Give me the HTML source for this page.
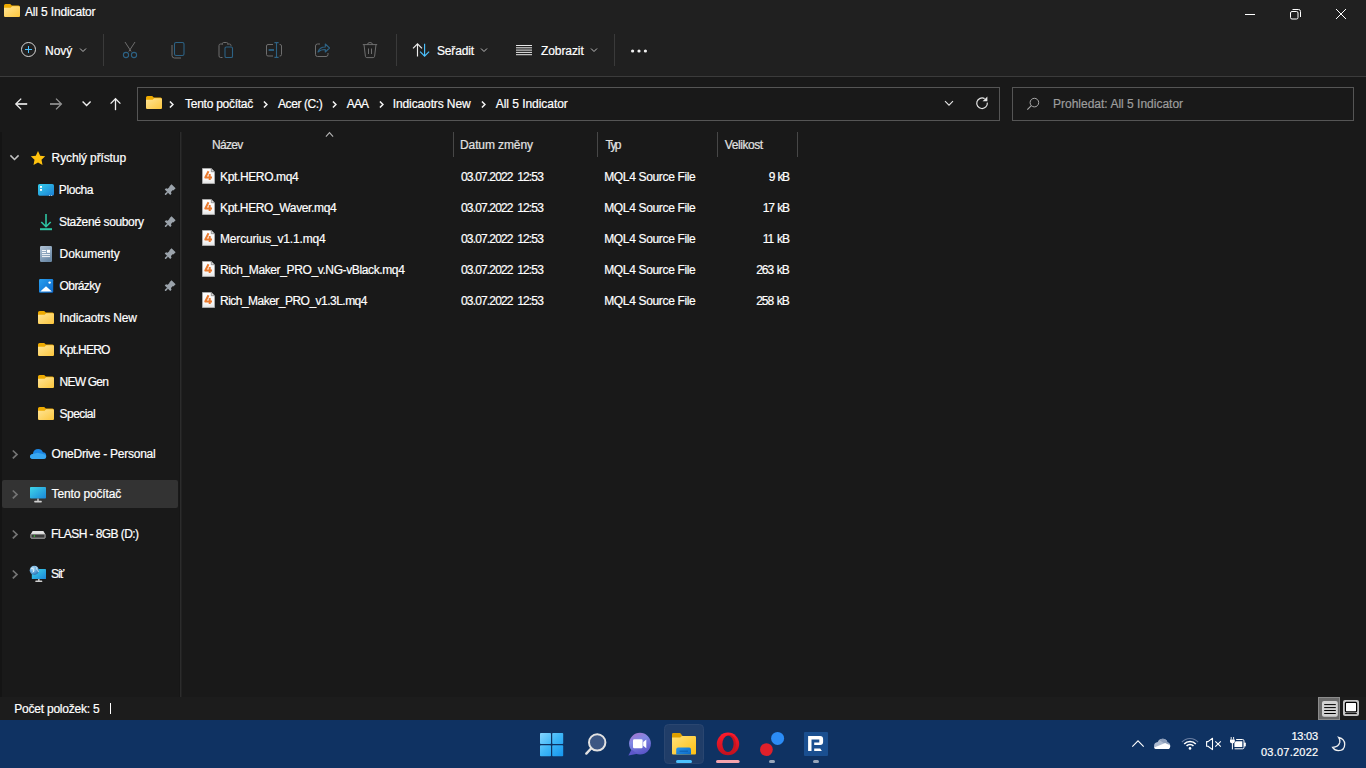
<!DOCTYPE html>
<html><head><meta charset="utf-8">
<style>
*{margin:0;padding:0;box-sizing:border-box}
html,body{width:1366px;height:768px;overflow:hidden;background:#191919;font-family:"Liberation Sans",sans-serif;font-size:12px;color:#fff}
.a{position:absolute}
.t{position:absolute;white-space:nowrap;line-height:16px;font-size:12px;-webkit-text-stroke:0.2px currentColor}
svg.i{position:absolute;overflow:visible}
#top{left:0;top:0;width:1366px;height:76px;background:#202020}
#sep76{left:0;top:76px;width:1366px;height:1px;background:#3b3b3b}
.vsep{position:absolute;width:1px;background:#3a3a3a}
.box{position:absolute;border:1px solid #555}
.hsep{position:absolute;width:1px;top:132px;height:25px;background:#474747}
.num{word-spacing:2px}
.sz{position:absolute;white-space:nowrap;line-height:16px;text-align:right;width:80px;word-spacing:1.5px;-webkit-text-stroke:0.2px currentColor}
#status{left:0;top:697px;width:1366px;height:23px;background:#1c1c1c}
#taskbar{left:0;top:720px;width:1366px;height:48px;background:#0f3262}
</style></head>
<body>
<svg width="0" height="0" style="position:absolute">
 <defs>
  <linearGradient id="gFold" x1="0" y1="0" x2="1" y2="1">
   <stop offset="0" stop-color="#ffe597"/><stop offset="1" stop-color="#fcc63d"/>
  </linearGradient>
  <symbol id="folder" viewBox="0 0 16 13">
   <path d="M0 1.6Q0 0 1.6 0H6.2L7.8 1.6H14.4Q16 1.6 16 3.2V11.4Q16 13 14.4 13H1.6Q0 13 0 11.4Z" fill="#eeaa00"/>
   <path d="M0 3.8H6.6L8.2 2.2H14.6Q16 2.2 16 3.6V11.6Q16 13 14.6 13H1.4Q0 13 0 11.6Z" fill="url(#gFold)"/>
  </symbol>
  <symbol id="mq4" viewBox="0 0 13 16">
   <defs><linearGradient id="gPage" x1="0" y1="0" x2="0" y2="1"><stop offset="0" stop-color="#ffffff"/><stop offset="0.75" stop-color="#f6f6f6"/><stop offset="1" stop-color="#e2e2e2"/></linearGradient></defs>
   <path d="M0.5 0.5H9.3L12.5 3.7V15.5H0.5Z" fill="url(#gPage)" stroke="#a9a9a9" stroke-width="1"/>
   <path d="M9.3 0.6V3.7H12.4Z" fill="#f4f4f4" stroke="#6a6a6a" stroke-width="0.7" stroke-linejoin="round"/>
   <path d="M6.5 3.2L3.3 9.5H10M7.7 6V12" fill="none" stroke="#ea7a2e" stroke-width="2" stroke-linejoin="round"/>
  </symbol>
  <symbol id="pin" viewBox="0 0 12 12">
   <g transform="translate(4.9 6.9) rotate(45)" fill="#9ba3ab">
    <path d="M-2.9 -6.6H2.9V-3.4H2.3V-0.6L3.9 0.2V2H-3.9V0.2L-2.3 -0.6V-3.4H-2.9Z"/>
    <rect x="-0.75" y="1.8" width="1.5" height="3.6" rx="0.5"/>
   </g>
  </symbol>
  <symbol id="chevR" viewBox="0 0 8 10">
   <path d="M1.8 1.5L6 5.4L1.8 9.4" fill="none" stroke="#747474" stroke-width="1.7"/>
  </symbol>
  <symbol id="bc" viewBox="0 0 5 7">
   <path d="M0.9 0.5L3.9 3.5L0.9 6.5" fill="none" stroke="#f2f2f2" stroke-width="1.55"/>
  </symbol>
 </defs>
</svg>

<div id="top" class="a"></div>
<div id="sep76" class="a"></div>

<!-- title -->
<svg class="i" style="left:4px;top:4px" width="16" height="13"><use href="#folder"/></svg>
<div class="t" style="left:25.0px;top:4px;letter-spacing:-0.15px">All 5 Indicator</div>
<svg class="i" style="left:1240px;top:8px" width="20" height="12" viewBox="1240 8 20 12">
 <path d="M1245 14.5H1255" stroke="#fff" stroke-width="1"/>
</svg>
<svg class="i" style="left:1286px;top:6px" width="18" height="16" viewBox="1286 6 18 16">
 <rect x="1290.5" y="11.5" width="7.5" height="7.5" rx="1.5" fill="none" stroke="#fff" stroke-width="1"/>
 <path d="M1292.5 9.5H1298.5Q1300.5 9.5 1300.5 11.5V17" fill="none" stroke="#fff" stroke-width="1"/>
</svg>
<svg class="i" style="left:1332px;top:6px" width="18" height="16" viewBox="1332 6 18 16">
 <path d="M1336 9L1346 19M1346 9L1336 19" stroke="#fff" stroke-width="1"/>
</svg>

<!-- command bar -->
<svg class="i" style="left:20px;top:41px" width="18" height="18" viewBox="20 41 18 18">
 <circle cx="28.5" cy="49.5" r="7" fill="none" stroke="#d6d6d6" stroke-width="1"/>
 <path d="M28.5 46V53M25 49.5H32" stroke="#4cc2ff" stroke-width="1"/>
</svg>
<div class="t" style="left:45.0px;top:43px;letter-spacing:-0.00px">Nový</div>
<svg class="i" style="left:78px;top:46px" width="10" height="8" viewBox="78 46 10 8">
 <path d="M80 48.5L83 51.5L86 48.5" fill="none" stroke="#bdbdbd" stroke-width="1"/>
</svg>
<div class="vsep" style="left:103px;top:34px;height:32px"></div>
<!-- disabled icons -->
<svg class="i" style="left:120px;top:40px" width="20" height="20" viewBox="120 40 20 20">
 <path d="M125 42L131.2 51.5M135 42L128.8 51.5" stroke="#6e6e6e" stroke-width="1"/>
 <circle cx="126" cy="55" r="2.6" fill="none" stroke="#2d6284" stroke-width="1.1"/>
 <circle cx="134" cy="55" r="2.6" fill="none" stroke="#2d6284" stroke-width="1.1"/>
</svg>
<svg class="i" style="left:168px;top:40px" width="20" height="20" viewBox="168 40 20 20">
 <path d="M172 45V55.5Q172 58 174.5 58H181" fill="none" stroke="#6e6e6e" stroke-width="1"/>
 <rect x="174.5" y="42.5" width="9.5" height="13" rx="1.6" fill="none" stroke="#2d6284" stroke-width="1.1"/>
</svg>
<svg class="i" style="left:215px;top:40px" width="22" height="20" viewBox="215 40 22 20">
 <path d="M222.5 57.5H220.6Q219 57.5 219 55.9V45.6Q219 44 220.6 44H222.3M227.8 44H229.4Q231 44 231 45.6V46.2M222.5 44.6V43.6Q222.5 42.5 223.6 42.5H226.6Q227.7 42.5 227.7 43.6V44.6" fill="none" stroke="#6e6e6e" stroke-width="1"/>
 <rect x="225" y="47" width="7.5" height="10.5" rx="1.3" fill="none" stroke="#2d6284" stroke-width="1.1"/>
</svg>
<svg class="i" style="left:263px;top:40px" width="22" height="20" viewBox="263 40 22 20">
 <path d="M273 44.5H268Q266.5 44.5 266.5 46V54.5Q266.5 56 268 56H273M279.6 44.5H280Q281.5 44.5 281.5 46V54.5Q281.5 56 280 56H279.6" fill="none" stroke="#6e6e6e" stroke-width="1"/>
 <path d="M274.4 42.6H278.6M276.5 42.6V57.4M274.4 57.4H278.6" fill="none" stroke="#2d6284" stroke-width="1.1"/>
 <path d="M268.6 50H274" stroke="#2d6284" stroke-width="1.8"/>
</svg>
<svg class="i" style="left:312px;top:40px" width="22" height="20" viewBox="312 40 22 20">
 <path d="M320 44H317.5Q315.5 44 315.5 46V54.5Q315.5 56.5 317.5 56.5H326Q328 56.5 328 54.5V53" fill="none" stroke="#6e6e6e" stroke-width="1"/>
 <path d="M318 52Q319.5 47 325.3 47V44L329.5 48L325.3 52V49.5Q320.5 49.5 318 52Z" fill="none" stroke="#2d6284" stroke-width="1.1" stroke-linejoin="round"/>
</svg>
<svg class="i" style="left:360px;top:40px" width="20" height="20" viewBox="360 40 20 20">
 <path d="M362.8 44.6H377.2M367.5 44.6Q367.5 42.5 370 42.5Q372.5 42.5 372.5 44.6M364 44.6L365.4 56.3Q365.6 57.6 366.8 57.6H373.2Q374.4 57.6 374.6 56.3L376 44.6M368.5 48.5V54M371.5 48.5V54" fill="none" stroke="#6e6e6e" stroke-width="1"/>
</svg>
<div class="vsep" style="left:396px;top:34px;height:32px"></div>
<svg class="i" style="left:410px;top:40px" width="22" height="20" viewBox="410 40 22 20">
 <path d="M417.5 56.5V44.2M413 48.4L417.5 43.9L422 48.4" fill="none" stroke="#eeeeee" stroke-width="1.15"/>
 <path d="M424.6 43.8V56M420.1 51.7L424.6 56.2L429.1 51.7" fill="none" stroke="#4cc2ff" stroke-width="1.15"/>
</svg>
<div class="t" style="left:437.0px;top:43px;letter-spacing:-0.17px">Seřadit</div>
<svg class="i" style="left:479px;top:46px" width="10" height="8" viewBox="479 46 10 8">
 <path d="M481 48.5L484 51.5L487 48.5" fill="none" stroke="#bdbdbd" stroke-width="1"/>
</svg>
<svg class="i" style="left:514px;top:42px" width="20" height="16" viewBox="514 42 20 16">
 <path d="M516 45.5H532M516 47.8H532M516 50.1H532M516 52.4H532M516 54.7H532" stroke="#e8e8e8" stroke-width="1"/>
</svg>
<div class="t" style="left:541.0px;top:43px;letter-spacing:-0.09px">Zobrazit</div>
<svg class="i" style="left:589px;top:46px" width="10" height="8" viewBox="589 46 10 8">
 <path d="M591 48.5L594 51.5L597 48.5" fill="none" stroke="#bdbdbd" stroke-width="1"/>
</svg>
<div class="vsep" style="left:614px;top:34px;height:32px"></div>
<svg class="i" style="left:628px;top:46px" width="22" height="10" viewBox="628 46 22 10">
 <circle cx="632.6" cy="51" r="1.6" fill="#f0f0f0"/><circle cx="639" cy="51" r="1.6" fill="#f0f0f0"/><circle cx="645.4" cy="51" r="1.6" fill="#f0f0f0"/>
</svg>

<!-- nav -->
<svg class="i" style="left:10px;top:94px" width="120" height="20" viewBox="10 94 120 20">
 <path d="M16.4 104H27.2" stroke="#ececec" stroke-width="1.7"/>
 <path d="M21.2 98.6L15.8 104L21.2 109.4" fill="none" stroke="#f0f0f0" stroke-width="1.3"/>
 <path d="M50 104H60.8" stroke="#959595" stroke-width="1.7"/>
 <path d="M56 98.6L61.4 104L56 109.4" fill="none" stroke="#959595" stroke-width="1.3"/>
 <path d="M82.6 101.5L86.6 105.5L90.6 101.5" fill="none" stroke="#eeeeee" stroke-width="1.4"/>
 <path d="M115.5 98.8V110.2" stroke="#eeeeee" stroke-width="1.3"/><path d="M110.6 103.6L115.5 98.7L120.4 103.6" fill="none" stroke="#eeeeee" stroke-width="1.3"/>
</svg>

<!-- address -->
<div class="box" style="left:137px;top:87px;width:863px;height:34px"></div>
<div class="box" style="left:1012px;top:87px;width:342px;height:34px"></div>
<svg class="i" style="left:146px;top:96px" width="16" height="13"><use href="#folder"/></svg>
<svg class="i" style="left:168.5px;top:101px" width="5" height="7"><use href="#bc"/></svg>
<div class="t" style="left:185.0px;top:96px;letter-spacing:-0.26px">Tento počítač</div>
<svg class="i" style="left:262.5px;top:101px" width="5" height="7"><use href="#bc"/></svg>
<div class="t" style="left:278.0px;top:96px;letter-spacing:-0.40px">Acer (C:)</div>
<svg class="i" style="left:331.5px;top:101px" width="5" height="7"><use href="#bc"/></svg>
<div class="t" style="left:346.8px;top:96px;letter-spacing:-0.90px">AAA</div>
<svg class="i" style="left:378.5px;top:101px" width="5" height="7"><use href="#bc"/></svg>
<div class="t" style="left:392.8px;top:96px;letter-spacing:-0.12px">Indicaotrs New</div>
<svg class="i" style="left:480.5px;top:101px" width="5" height="7"><use href="#bc"/></svg>
<div class="t" style="left:495.8px;top:96px;letter-spacing:-0.05px">All 5 Indicator</div>
<svg class="i" style="left:940px;top:96px" width="56" height="18" viewBox="940 96 56 18">
 <path d="M945 101.2L949 105.2L953 101.2" fill="none" stroke="#e6e6e6" stroke-width="1.1"/>
 <path d="M987.3 102.6A5.3 5.3 0 1 1 984.6 98.6" fill="none" stroke="#e6e6e6" stroke-width="1.2"/>
 <path d="M982.6 101.2L987.4 96.6V101.2Z" fill="#e6e6e6"/>
</svg>
<svg class="i" style="left:1024px;top:95px" width="18" height="18" viewBox="1024 95 18 18">
 <circle cx="1034.4" cy="102.6" r="4.3" fill="none" stroke="#a8a8a8" stroke-width="1"/>
 <path d="M1031.3 105.7L1027.3 109.7" stroke="#a8a8a8" stroke-width="1.1"/>
</svg>
<div class="t" style="left:1053.0px;top:96px;color:#9d9d9d;letter-spacing:0.00px">Prohledat: All 5 Indicator</div>

<!-- SIDEBAR -->
<div class="a" style="left:179px;top:132px;width:1px;height:565px;background:#161616"></div>
<div class="a" style="left:180px;top:132px;width:1px;height:565px;background:#2c2c2c"></div>
<div class="a" style="left:181px;top:132px;width:1px;height:565px;background:#212121"></div>
<div class="a" style="left:0;top:132px;width:2px;height:565px;background:#141414"></div>
<div class="a" style="left:2px;top:480px;width:176px;height:28px;background:#333;border-radius:2px"></div>
<svg class="i" style="left:8px;top:152px" width="14" height="10" viewBox="8 152 14 10">
 <path d="M10.4 155.4L14.5 159.5L18.6 155.4" fill="none" stroke="#c4c4c4" stroke-width="1.5"/>
</svg>
<svg class="i" style="left:30px;top:150px" width="16" height="16" viewBox="30 150 16 16">
 <path d="M38 151L40.2 155.7L45.2 156.3L41.5 159.8L42.5 164.9L38 162.4L33.5 164.9L34.5 159.8L30.8 156.3L35.8 155.7Z" fill="#ffc20e"/>
</svg>
<div class="t" style="left:51.6px;top:150px;letter-spacing:-0.12px">Rychlý přístup</div>

<svg class="i" style="left:38px;top:184px" width="16" height="12" viewBox="38 184 16 12">
 <defs><linearGradient id="gDesk" x1="0" y1="0" x2="1" y2="1"><stop offset="0" stop-color="#35cdea"/><stop offset="1" stop-color="#1b7fd6"/></linearGradient></defs>
 <rect x="38" y="184" width="16" height="11.7" rx="1.6" fill="url(#gDesk)"/>
 <rect x="40" y="186" width="2" height="1.8" fill="#fff"/><rect x="40" y="189" width="2" height="1.8" fill="#fff"/>
 <rect x="49" y="195" width="1" height="0.7" fill="#ddd"/><rect x="51" y="195" width="1" height="0.7" fill="#ddd"/>
</svg>
<div class="t" style="left:58.8px;top:182px;letter-spacing:-0.40px">Plocha</div>
<svg class="i" style="left:39px;top:213px" width="14" height="18" viewBox="39 213 14 18">
 <path d="M46 214V226.5M41.3 222L46 226.7L50.7 222" fill="none" stroke="#2ec4a2" stroke-width="1.6"/>
 <path d="M40 229.2H52" stroke="#2ec4a2" stroke-width="2"/>
</svg>
<div class="t" style="left:59.0px;top:214px;letter-spacing:-0.36px">Stažené soubory</div>
<svg class="i" style="left:40px;top:246px" width="12" height="16" viewBox="40 246 12 16">
 <defs><linearGradient id="gDoc" x1="0" y1="0" x2="0.6" y2="1"><stop offset="0" stop-color="#b2c4d6"/><stop offset="1" stop-color="#6b89a6"/></linearGradient></defs>
 <rect x="40" y="246" width="12" height="16" rx="1.2" fill="url(#gDoc)"/>
 <path d="M42 250.5H46M42 252.5H46M42 254.6H50M42 256.6H50" stroke="#fff" stroke-width="0.9"/>
 <rect x="47" y="249.8" width="3" height="3" fill="#fff"/>
</svg>
<div class="t" style="left:59.6px;top:246px;letter-spacing:-0.08px">Dokumenty</div>
<svg class="i" style="left:39px;top:279px" width="14" height="14" viewBox="39 279 14 14">
 <defs><linearGradient id="gPic" x1="0" y1="0" x2="1" y2="1"><stop offset="0" stop-color="#2aa0f0"/><stop offset="1" stop-color="#0b68cc"/></linearGradient></defs>
 <rect x="39" y="279" width="14.2" height="13.8" rx="1.2" fill="url(#gPic)"/>
 <path d="M40.3 291.6L46 286.3L51.9 291.6Z" fill="#fff"/>
 <circle cx="49.6" cy="282.6" r="1.2" fill="#fff"/>
</svg>
<div class="t" style="left:59.6px;top:278px;letter-spacing:-0.60px">Obrázky</div>
<svg class="i" style="left:164px;top:184px" width="12" height="12"><use href="#pin"/></svg>
<svg class="i" style="left:164px;top:216px" width="12" height="12"><use href="#pin"/></svg>
<svg class="i" style="left:164px;top:248px" width="12" height="12"><use href="#pin"/></svg>
<svg class="i" style="left:164px;top:280px" width="12" height="12"><use href="#pin"/></svg>

<svg class="i" style="left:38px;top:311px" width="16" height="13"><use href="#folder"/></svg>
<div class="t" style="left:59.6px;top:310px;letter-spacing:-0.16px">Indicaotrs New</div>
<svg class="i" style="left:38px;top:343px" width="16" height="13"><use href="#folder"/></svg>
<div class="t" style="left:59.6px;top:342px;letter-spacing:-0.74px">Kpt.HERO</div>
<svg class="i" style="left:38px;top:375px" width="16" height="13"><use href="#folder"/></svg>
<div class="t" style="left:59.6px;top:374px;letter-spacing:-0.80px">NEW Gen</div>
<svg class="i" style="left:38px;top:407px" width="16" height="13"><use href="#folder"/></svg>
<div class="t" style="left:59.6px;top:406px;letter-spacing:-0.56px">Special</div>

<svg class="i" style="left:11px;top:449px" width="8" height="10"><use href="#chevR"/></svg>
<svg class="i" style="left:11px;top:489px" width="8" height="10"><use href="#chevR"/></svg>
<svg class="i" style="left:11px;top:529px" width="8" height="10"><use href="#chevR"/></svg>
<svg class="i" style="left:11px;top:569px" width="8" height="10"><use href="#chevR"/></svg>

<svg class="i" style="left:30px;top:448px" width="16" height="12" viewBox="30 448 16 12">
 <path d="M33 459Q30 459 30 456.6Q30 454.2 32.8 453.9Q33.6 449 38.2 449Q41.6 449 42.9 452.3Q46.2 452.6 46.2 455.8Q46.2 459 43 459Z" fill="#1b86e3"/>
 <path d="M33 459Q30 459 30 456.6Q30 454.8 32 454.2L37.5 452.8L43 454Q46.2 454.6 46.2 456.5Q46.2 459 43 459Z" fill="#38a6f0"/>
</svg>
<div class="t" style="left:51.6px;top:446px;letter-spacing:-0.26px">OneDrive - Personal</div>
<svg class="i" style="left:30px;top:487px" width="16" height="16" viewBox="30 487 16 16">
 <defs><linearGradient id="gMon" x1="0" y1="0" x2="1" y2="1"><stop offset="0" stop-color="#3fd6ea"/><stop offset="1" stop-color="#1a86d8"/></linearGradient></defs>
 <rect x="30" y="487" width="16" height="11.6" rx="0.8" fill="url(#gMon)"/>
 <rect x="37.2" y="498.6" width="1.6" height="2.4" fill="#bcbcbc"/>
 <rect x="34.2" y="500.8" width="7.6" height="1.6" rx="0.6" fill="#d0d0d0"/>
</svg>
<div class="t" style="left:51.6px;top:486px;letter-spacing:-0.14px">Tento počítač</div>
<svg class="i" style="left:30px;top:530px" width="16" height="9" viewBox="30 530 16 9">
 <path d="M32.6 531H43.4L45.2 534.2H30.8Z" fill="#e2e2e2"/>
 <rect x="30.9" y="534" width="14.2" height="4.2" rx="0.5" fill="#3a3a3a" stroke="#d2d2d2" stroke-width="0.8"/>
 <circle cx="34.4" cy="536" r="0.75" fill="#2de02d"/>
</svg>
<div class="t" style="left:51.0px;top:526px;letter-spacing:-0.58px">FLASH - 8GB (D:)</div>
<svg class="i" style="left:29px;top:565px" width="18" height="18" viewBox="29 565 18 18">
 <defs><radialGradient id="gGlobe" cx="0.35" cy="0.3" r="0.75"><stop offset="0" stop-color="#b5def7"/><stop offset="0.6" stop-color="#5aa3da"/><stop offset="1" stop-color="#2c6fb0"/></radialGradient></defs>
 <rect x="31.8" y="569" width="14.2" height="10" rx="0.6" fill="url(#gMon)"/>
 <rect x="38" y="579" width="1.6" height="2" fill="#bcbcbc"/>
 <rect x="35.3" y="580.6" width="7" height="1.5" rx="0.6" fill="#d0d0d0"/>
 <circle cx="34.3" cy="570.3" r="4.6" fill="url(#gGlobe)"/>
 <path d="M31.2 568.4Q33.2 567.6 33.6 569.6Q34.4 571 32.8 572.4M35.8 566.4Q37.6 567.6 36.8 569.2Q38 570.2 38.4 571.8" fill="none" stroke="#e6f4fc" stroke-width="1"/>
</svg>
<div class="t" style="left:51.0px;top:566px;letter-spacing:-1.30px">Síť</div>
<!-- SIDEBAR_END -->

<!-- CONTENT -->
<svg class="i" style="left:323px;top:130px" width="12" height="8" viewBox="323 130 12 8">
 <path d="M325.9 136.6L329.5 132.6L333.1 136.6" fill="none" stroke="#b4b4b4" stroke-width="1.1"/>
</svg>
<div class="t" style="left:212.0px;top:137px;letter-spacing:-0.70px;color:#e2e2e2">Název</div>
<div class="hsep" style="left:453px"></div>
<div class="t" style="left:460.0px;top:137px;letter-spacing:-0.10px;color:#e2e2e2">Datum změny</div>
<div class="hsep" style="left:597px"></div>
<div class="t" style="left:605.4px;top:137px;letter-spacing:-1.60px;color:#e2e2e2">Typ</div>
<div class="hsep" style="left:717px"></div>
<div class="t" style="left:724.8px;top:137px;letter-spacing:-0.43px;color:#e2e2e2">Velikost</div>
<div class="hsep" style="left:797px"></div>

<svg class="i" style="left:202px;top:168px" width="13" height="16"><use href="#mq4"/></svg>
<div class="t" style="left:220.0px;top:169px;letter-spacing:-0.36px">Kpt.HERO.mq4</div>
<div class="t num" style="left:461.0px;top:169px;letter-spacing:-0.84px">03.07.2022 12:53</div>
<div class="t" style="left:604.2px;top:169px;letter-spacing:-0.34px">MQL4 Source File</div>
<div class="sz" style="left:708.6px;top:169px;letter-spacing:-1.40px">9 kB</div>

<svg class="i" style="left:202px;top:199px" width="13" height="16"><use href="#mq4"/></svg>
<div class="t" style="left:220.0px;top:200px;letter-spacing:-0.37px">Kpt.HERO_Waver.mq4</div>
<div class="t num" style="left:461.0px;top:200px;letter-spacing:-0.84px">03.07.2022 12:53</div>
<div class="t" style="left:604.2px;top:200px;letter-spacing:-0.34px">MQL4 Source File</div>
<div class="sz" style="left:708.9px;top:200px;letter-spacing:-1.22px">17 kB</div>

<svg class="i" style="left:202px;top:230px" width="13" height="16"><use href="#mq4"/></svg>
<div class="t" style="left:220.0px;top:231px;letter-spacing:-0.18px">Mercurius_v1.1.mq4</div>
<div class="t num" style="left:461.0px;top:231px;letter-spacing:-0.84px">03.07.2022 12:53</div>
<div class="t" style="left:604.2px;top:231px;letter-spacing:-0.34px">MQL4 Source File</div>
<div class="sz" style="left:709.1px;top:231px;letter-spacing:-0.97px">11 kB</div>

<svg class="i" style="left:202px;top:261px" width="13" height="16"><use href="#mq4"/></svg>
<div class="t" style="left:220.0px;top:262px;letter-spacing:-0.38px">Rich_Maker_PRO_v.NG-vBlack.mq4</div>
<div class="t num" style="left:461.0px;top:262px;letter-spacing:-0.84px">03.07.2022 12:53</div>
<div class="t" style="left:604.2px;top:262px;letter-spacing:-0.34px">MQL4 Source File</div>
<div class="sz" style="left:708.8px;top:262px;letter-spacing:-1.04px">263 kB</div>

<svg class="i" style="left:202px;top:292px" width="13" height="16"><use href="#mq4"/></svg>
<div class="t" style="left:220.0px;top:293px;letter-spacing:-0.52px">Rich_Maker_PRO_v1.3L.mq4</div>
<div class="t num" style="left:461.0px;top:293px;letter-spacing:-0.84px">03.07.2022 12:53</div>
<div class="t" style="left:604.2px;top:293px;letter-spacing:-0.34px">MQL4 Source File</div>
<div class="sz" style="left:708.8px;top:293px;letter-spacing:-1.04px">258 kB</div>
<!-- CONTENT_END -->

<!-- STATUS -->
<div id="status" class="a"></div>
<div class="t" style="left:14.2px;top:701px;letter-spacing:-0.21px">Počet položek: 5</div>
<div class="a" style="left:110px;top:703px;width:1px;height:11px;background:#fff"></div>
<svg class="i" style="left:1316px;top:696px" width="46" height="25" viewBox="1316 696 46 25">
 <rect x="1318.5" y="697.5" width="21" height="22" fill="#6b6b6b" stroke="#8c8c8c" stroke-width="1"/>
 <rect x="1322" y="701" width="15.8" height="15.8" rx="2" fill="#d2d2d2"/>
 <path d="M1324.2 704.6H1335.8M1324.2 707.6H1335.8M1324.2 710.5H1335.8M1324.2 713.5H1335.8" stroke="#000" stroke-width="1"/>
 <rect x="1343" y="700" width="16" height="16" rx="2" fill="#c8c8c8"/>
 <rect x="1345.4" y="702.4" width="11.2" height="9.4" rx="1" fill="#fff" stroke="#000" stroke-width="1.2"/>
 <path d="M1345.2 713.6H1356.8" stroke="#000" stroke-width="1"/>
</svg>

<!-- TASKBAR -->
<div id="taskbar" class="a"></div>
<svg class="i" style="left:536px;top:724px" width="300" height="44" viewBox="536 724 300 44">
 <defs>
  <linearGradient id="gWin" gradientUnits="userSpaceOnUse" x1="540" y1="733" x2="563" y2="756"><stop offset="0" stop-color="#86d6ff"/><stop offset="0.5" stop-color="#3db6f7"/><stop offset="1" stop-color="#1596ee"/></linearGradient>
  <linearGradient id="gTeams" gradientUnits="userSpaceOnUse" x1="631" y1="733" x2="640" y2="755"><stop offset="0" stop-color="#a872cc"/><stop offset="0.4" stop-color="#8088e4"/><stop offset="1" stop-color="#5a55c8"/></linearGradient>
  <linearGradient id="gExpF" x1="0" y1="0" x2="1" y2="1"><stop offset="0" stop-color="#ffe27a"/><stop offset="1" stop-color="#ffbf10"/></linearGradient>
  <linearGradient id="gTray" x1="0" y1="0" x2="1" y2="1"><stop offset="0" stop-color="#2a97e8"/><stop offset="1" stop-color="#0b68c6"/></linearGradient>
  <linearGradient id="gOp" x1="0" y1="0" x2="0" y2="1"><stop offset="0" stop-color="#ff1b2d"/><stop offset="1" stop-color="#c0101e"/></linearGradient>
 </defs>
 <rect x="540" y="733" width="11" height="11" rx="0.8" fill="url(#gWin)"/>
 <rect x="552.2" y="733" width="11" height="11" rx="0.8" fill="url(#gWin)"/>
 <rect x="540" y="745.2" width="11" height="11" rx="0.8" fill="url(#gWin)"/>
 <rect x="552.2" y="745.2" width="11" height="11" rx="0.8" fill="url(#gWin)"/>
 <circle cx="597.2" cy="742.4" r="8.2" fill="#3b5683" stroke="#e2e2e2" stroke-width="2"/>
 <path d="M591.3 748.3L586.3 753.6" stroke="#e2e2e2" stroke-width="2.4" stroke-linecap="round"/>
 <circle cx="640" cy="743.6" r="10.9" fill="url(#gTeams)"/>
 <path d="M631.5 749.5L628.4 755.4L637.5 753.8Z" fill="#5c57ca"/>
 <rect x="633" y="739.2" width="9.6" height="9" rx="1.2" fill="#fff"/>
 <path d="M643.2 742L646.3 739.6V748.2L643.2 745.8Z" fill="#fff"/>
 <rect x="664.5" y="724.5" width="39" height="39" rx="4" fill="#203d68" stroke="#2a4670" stroke-width="1"/>
 <path d="M672 734.2Q672 733 673.2 733H680.2L682.2 735.6V738H672Z" fill="#dea000"/>
 <path d="M672 737.6H680.2L682 736H694.8Q696 736 696 737.2V753.6Q696 754.6 695 754.6H673Q672 754.6 672 753.6Z" fill="url(#gExpF)"/>
 <path d="M676.2 754.6V749.4Q676.2 747.6 678 747.6H689.2Q691 747.6 691 749.4V754.6Z" fill="url(#gTray)"/>
 <path d="M679.6 751.2H688" stroke="#0d5fb2" stroke-width="1.1"/>
 <rect x="676" y="760" width="16" height="3" rx="1.5" fill="#4cc2ff"/>
 <ellipse cx="728" cy="743.9" rx="11.2" ry="11.3" fill="url(#gOp)"/>
 <ellipse cx="729.4" cy="743.9" rx="6.6" ry="9.2" fill="#c8141f"/>
 <ellipse cx="728" cy="743.9" rx="5.6" ry="8.1" fill="#0f3262"/>
 <rect x="716" y="760" width="23.6" height="3" rx="1.5" fill="#f4a3ad"/>
 <circle cx="777.6" cy="738.4" r="6.5" fill="#2b8cf6"/>
 <circle cx="766.4" cy="749.6" r="6.4" fill="#e0202a"/>
 <rect x="769" y="760" width="6" height="3" rx="1.5" fill="#98a6ba"/>
 <rect x="804" y="732" width="24" height="24" rx="1" fill="#1a4f90"/>
 <path d="M808.1 736.1H820.1Q823.1 736.1 823.1 739.1V742.1Q823.1 745.1 820.1 745.1H814.2V742.4H819.3V739.4H811.5V751.1H808.1Z" fill="#fff"/>
 <path d="M814.2 748.4H820.2L821.9 751.1H814.2Z" fill="#fff"/>
 <rect x="813" y="760" width="6" height="3" rx="1.5" fill="#98a6ba"/>
</svg>
<svg class="i" style="left:1128px;top:734px" width="124" height="20" viewBox="1128 734 124 20">
 <path d="M1132.3 746.6L1138 740.8L1143.7 746.6" fill="none" stroke="#fff" stroke-width="1.1"/>
 <path d="M1156.6 749.1Q1154 749.1 1154 746.4Q1154 742.4 1157.8 742.1Q1159 738.8 1162.8 738.8Q1166.6 738.8 1167.5 742.5Q1170.2 742.9 1170.2 746Q1170.2 749.1 1167.4 749.1Z" fill="#aebbd0"/>
 <path d="M1159.6 740.2Q1160.9 738.8 1162.8 738.8Q1166.6 738.8 1167.5 742.5Q1168.8 742.7 1169.5 743.6L1165.6 744.2Z" fill="#8d9eba"/>
 <path d="M1154.2 747.6L1165.2 742.9L1170.1 745.6Q1170.2 745.8 1170.2 746Q1170.2 749.1 1167.4 749.1H1156.6Q1154.6 749.1 1154.2 747.6Z" fill="#fff"/>
 <path d="M1181.9 742.2A10.6 10.6 0 0 1 1198.1 742.2" fill="none" stroke="#6a7ea2" stroke-width="1.1"/>
 <path d="M1184.2 744.1A7.6 7.6 0 0 1 1195.8 744.1M1186.55 746.1A4.5 4.5 0 0 1 1193.45 746.1" fill="none" stroke="#fff" stroke-width="1.5"/>
 <circle cx="1190" cy="748.4" r="1.3" fill="#fff"/>
 <path d="M1206.6 741.6H1208L1212.5 738.3V749.6L1208 746.3H1206.6Z" fill="none" stroke="#fff" stroke-width="1.1" stroke-linejoin="round"/>
 <path d="M1215.3 741.3L1220.8 746.6M1220.8 741.3L1215.3 746.6" stroke="#fff" stroke-width="1.1"/>
 <path d="M1236.2 739.5H1242.6Q1244 739.5 1244 740.9V747.4Q1244 748.8 1242.6 748.8H1234.6" fill="none" stroke="#fff" stroke-width="1"/>
 <rect x="1244" y="742.6" width="1.8" height="3.8" rx="0.6" fill="#fff"/>
 <path d="M1234.4 743.6L1235.6 741.2H1242.3V747.1H1234.4Z" fill="#fff"/>
 <path d="M1231.2 737V739.6M1233.6 737V739.6" stroke="#fff" stroke-width="0.9"/>
 <path d="M1230 739.4H1234.8V741.6Q1234.8 743.2 1233.2 743.2H1231.6Q1230 743.2 1230 741.6Z" fill="#fff"/>
 <path d="M1232.4 743V749.4" stroke="#fff" stroke-width="1"/>
</svg>
<div class="t" style="left:1291.4px;top:728px;letter-spacing:-0.20px;font-size:11px">13:03</div>
<div class="t" style="left:1261.0px;top:744px;letter-spacing:0.23px;font-size:11px">03.07.2022</div>
<svg class="i" style="left:1330px;top:735px" width="18" height="18" viewBox="1330 735 18 18">
 <path d="M1338.6 737.4Q1344.7 739 1344.7 744.2Q1344.7 750.6 1338.4 750.6Q1334.6 750.6 1332.6 747.4Q1338.6 747 1339.8 742.4Q1340.2 739.8 1338.6 737.4Z" fill="none" stroke="#f0f0f0" stroke-width="1.3"/>
</svg>
<!-- TASKBAR_END -->
</body></html>
